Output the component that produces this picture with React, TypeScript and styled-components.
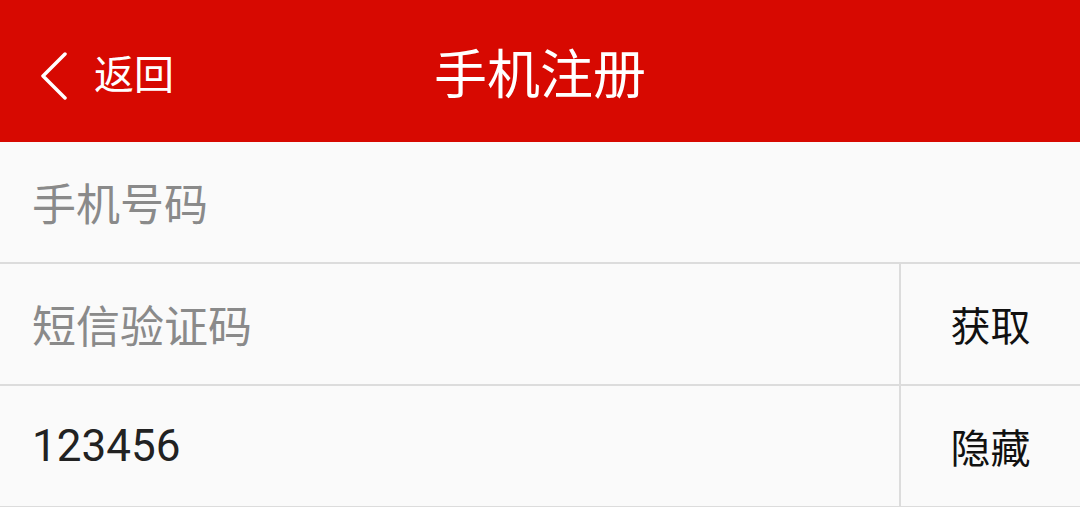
import React from "react";
import styled, { createGlobalStyle } from "styled-components";

const Global = createGlobalStyle`
  html, body { margin: 0; padding: 0; background: #fafafa; }
  body { font-family: Roboto, "Noto Sans CJK SC", sans-serif; }
`;

const Page = styled.div`
  width: 1080px;
  height: 507px;
  background: #fafafa;
  display: flex;
  flex-direction: column;
  overflow: hidden;
`;

const Header = styled.header`
  flex: none;
  height: 142px;
  background: #d70901;
  display: grid;
  grid-template-columns: 1fr auto 1fr;
  align-items: center;
  padding-top: 10px;
  box-sizing: border-box;
  color: #fff;
`;

const Back = styled.div`
  display: flex;
  align-items: center;
  gap: 26px;
  padding-left: 40px;
  font-size: 40px;
  line-height: 1;
`;

const Title = styled.h1`
  margin: 0;
  font-size: 53px;
  font-weight: 400;
  line-height: 1;
`;

const Row = styled.div`
  flex: none;
  height: 120px;
  border-bottom: 2px solid #dcdcdc;
  display: flex;
  align-items: stretch;
`;

const Field = styled.div<{ $placeholder?: boolean }>`
  flex: 1;
  display: flex;
  align-items: center;
  padding-left: 32px;
  font-size: 44px;
  color: ${(p) => (p.$placeholder ? "#8a8a8a" : "#222")};
`;

const Action = styled.div`
  width: 179px;
  border-left: 2px solid #dcdcdc;
  display: flex;
  align-items: center;
  justify-content: center;
  font-size: 40px;
  color: #111;
`;

export default function App() {
  return (
    <Page>
      <Global />
      <Header>
        <Back>
          <svg width="28" height="48" viewBox="0 0 28 48" fill="none">
            <path d="M25 2 L3 24 L25 46" stroke="#fff" strokeWidth="3.5" strokeLinecap="round" strokeLinejoin="round" />
          </svg>
          <span>返回</span>
        </Back>
        <Title>手机注册</Title>
        <div />
      </Header>
      <Row>
        <Field $placeholder>手机号码</Field>
      </Row>
      <Row>
        <Field $placeholder>短信验证码</Field>
        <Action>获取</Action>
      </Row>
      <Row>
        <Field>123456</Field>
        <Action>隐藏</Action>
      </Row>
    </Page>
  );
}
